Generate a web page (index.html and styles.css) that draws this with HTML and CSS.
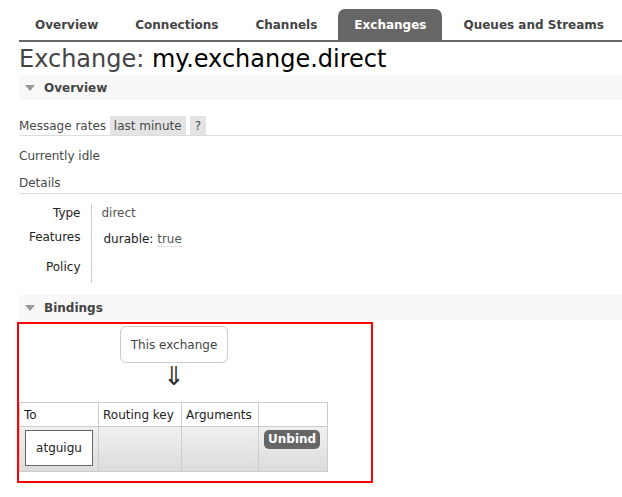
FILE: index.html
```html
<!DOCTYPE html>
<html>
<head>
<meta charset="utf-8">
<link rel="stylesheet" href="styles.css">
</head>
<body>
<div class="menu">
  <ul class="tabs">
    <li><a class="tab">Overview</a></li>
    <li><a class="tab">Connections</a></li>
    <li><a class="tab">Channels</a></li>
    <li><a class="tab selected">Exchanges</a></li>
    <li><a class="tab">Queues and Streams</a></li>
  </ul>
</div>
<div class="main">
  <h1 class="title">Exchange: <b>my.exchange.direct</b></h1>

  <div class="section">
    <h2 class="section-head"><span class="tri"></span>Overview</h2>
    <div class="rates">Message rates <span class="chip">last minute</span><span class="chip q">?</span></div>
    <p class="idle">Currently idle</p>
    <h3 class="sub">Details</h3>
    <table class="facts">
      <tr><th>Type</th><td>direct</td></tr>
      <tr><th>Features</th><td><span class="feat">durable:</span> <abbr class="val">true</abbr></td></tr>
      <tr class="policy"><th>Policy</th><td></td></tr>
    </table>
  </div>

  <div class="section">
    <h2 class="section-head"><span class="tri"></span>Bindings</h2>
    <div class="bindings">
      <div class="this-col">
        <span class="this-ex">This exchange</span>
        <span class="arrow">⇓</span>
      </div>
      <table class="list">
        <thead>
          <tr><th class="c1">To</th><th class="c2">Routing key</th><th class="c3">Arguments</th><th class="c4"></th></tr>
        </thead>
        <tbody>
          <tr>
            <td><span class="queue">atguigu</span></td>
            <td></td>
            <td></td>
            <td><span class="btn">Unbind</span></td>
          </tr>
        </tbody>
      </table>
    </div>
  </div>
</div>
</body>
</html>
```
FILE: styles.css
```css
* { box-sizing: border-box; }
html, body { margin: 0; padding: 0; background: #fff; }
body {
  font-family: "DejaVu Sans", Verdana, sans-serif;
  font-size: 12px;
  color: #484848;
}
.menu { padding: 9px 0 0 19px; }
.tabs {
  list-style: none;
  margin: 0;
  padding: 0;
  display: flex;
  border-bottom: 2px solid #666;
  height: 33px;
  white-space: nowrap;
}
.tabs li { display: flex; margin-right: 5px; flex-shrink: 0; }
.tab {
  display: flex;
  align-items: center;
  height: 31px;
  padding: 0 16px;
  font-weight: bold;
  color: #444;
  font-size: 12px;
  border-radius: 7px 7px 0 0;
}
.tab.selected { background: #666; color: #fff; }

.main { padding: 0 0 0 19px; }
.title {
  margin: 1px 0 0 0;
  font-weight: normal;
  font-size: 24px;
  line-height: 32px;
  color: #444;
  letter-spacing: 0;
}
.title b { font-weight: normal; color: #000; }

.section-head {
  margin: 0;
  height: 25px;
  background: #f8f8f8;
  display: flex;
  align-items: center;
  font-size: 12px;
  font-weight: bold;
  color: #444;
  padding-left: 6px;
}
.tri {
  width: 0; height: 0;
  border-left: 5px solid transparent;
  border-right: 5px solid transparent;
  border-top: 6px solid #999;
  margin-right: 9px;
}

.rates {
  margin-top: 16px;
  height: 20px;
  display: flex;
  align-items: center;
  border-bottom: 1px solid #ddd;
  white-space: pre;
}
.chip {
  background: #e4e4e4;
  height: 19px;
  display: flex;
  align-items: center;
  padding: 0 4px;
  margin-right: 4px;
}
.chip.q { padding: 0 5px; }
.idle { margin: 12px 0 0 0; line-height: 16px; }
.sub {
  margin: 11px 0 0 0;
  font-weight: normal;
  font-size: 12px;
  line-height: 16px;
  padding-bottom: 2px;
  border-bottom: 1px solid #ddd;
}

.facts { border-collapse: collapse; margin-top: 10px; }
.facts th {
  text-align: right;
  font-weight: normal;
  color: #222;
  width: 72px;
  padding: 2px 10px 2px 0;
  border-right: 1px solid #ccc;
  vertical-align: top;
  height: 24px;
}
.facts td { padding: 2px 0 2px 10px; color: #555; vertical-align: top; }
.facts tr.policy th, .facts tr.policy td { height: 31px; padding-top: 8px; }
.feat { color: #222; margin-left: 2px; }
.val { text-decoration: none; border-bottom: 1px dotted #ccc; padding-top: 2px; display: inline-block; }

.section + .section { margin-top: 12px; }

.bindings {
  border: 2px solid #f00;
  margin: 2px 0 0 -2px;
  width: 356px;
  padding: 2px 0 9px 0;
}
.this-col {
  width: 310px;
  display: flex;
  flex-direction: column;
  align-items: center;
}
.this-ex {
  border: 1px solid #ccc;
  border-radius: 6px;
  padding: 0 10px;
  height: 37px;
  display: flex;
  align-items: center;
  color: #444;
}
.arrow {
  font-size: 26px;
  line-height: 30px;
  margin-top: -2px;
  margin-bottom: 2px;
  color: #333;
  font-weight: 300;
  font-family: "DejaVu Sans", sans-serif;
}
.list {
  border-collapse: collapse;
  margin-top: 9px;
}
.list th, .list td { border: 1px solid #ccc; }
.list th {
  text-align: left;
  font-weight: normal;
  height: 24px;
  padding: 0 4px;
  color: #222;
}
.list th.c1 { width: 79px; }
.list th.c2 { width: 83px; }
.list th.c3 { width: 77px; }
.list th.c4 { width: 69px; }
.list tbody tr { background: linear-gradient(#f0f0f0, #dcdcdc); }
.list td { height: 45px; vertical-align: top; padding: 3px 5px; }
.queue {
  display: flex;
  align-items: center;
  justify-content: center;
  background: #fff;
  border: 1px solid #666;
  height: 36px;
  color: #222;
}
.btn {
  display: inline-block;
  background: #666;
  color: #fff;
  font-weight: bold;
  border-radius: 5px;
  padding: 2px 4px;
  line-height: 15px;
}
```
